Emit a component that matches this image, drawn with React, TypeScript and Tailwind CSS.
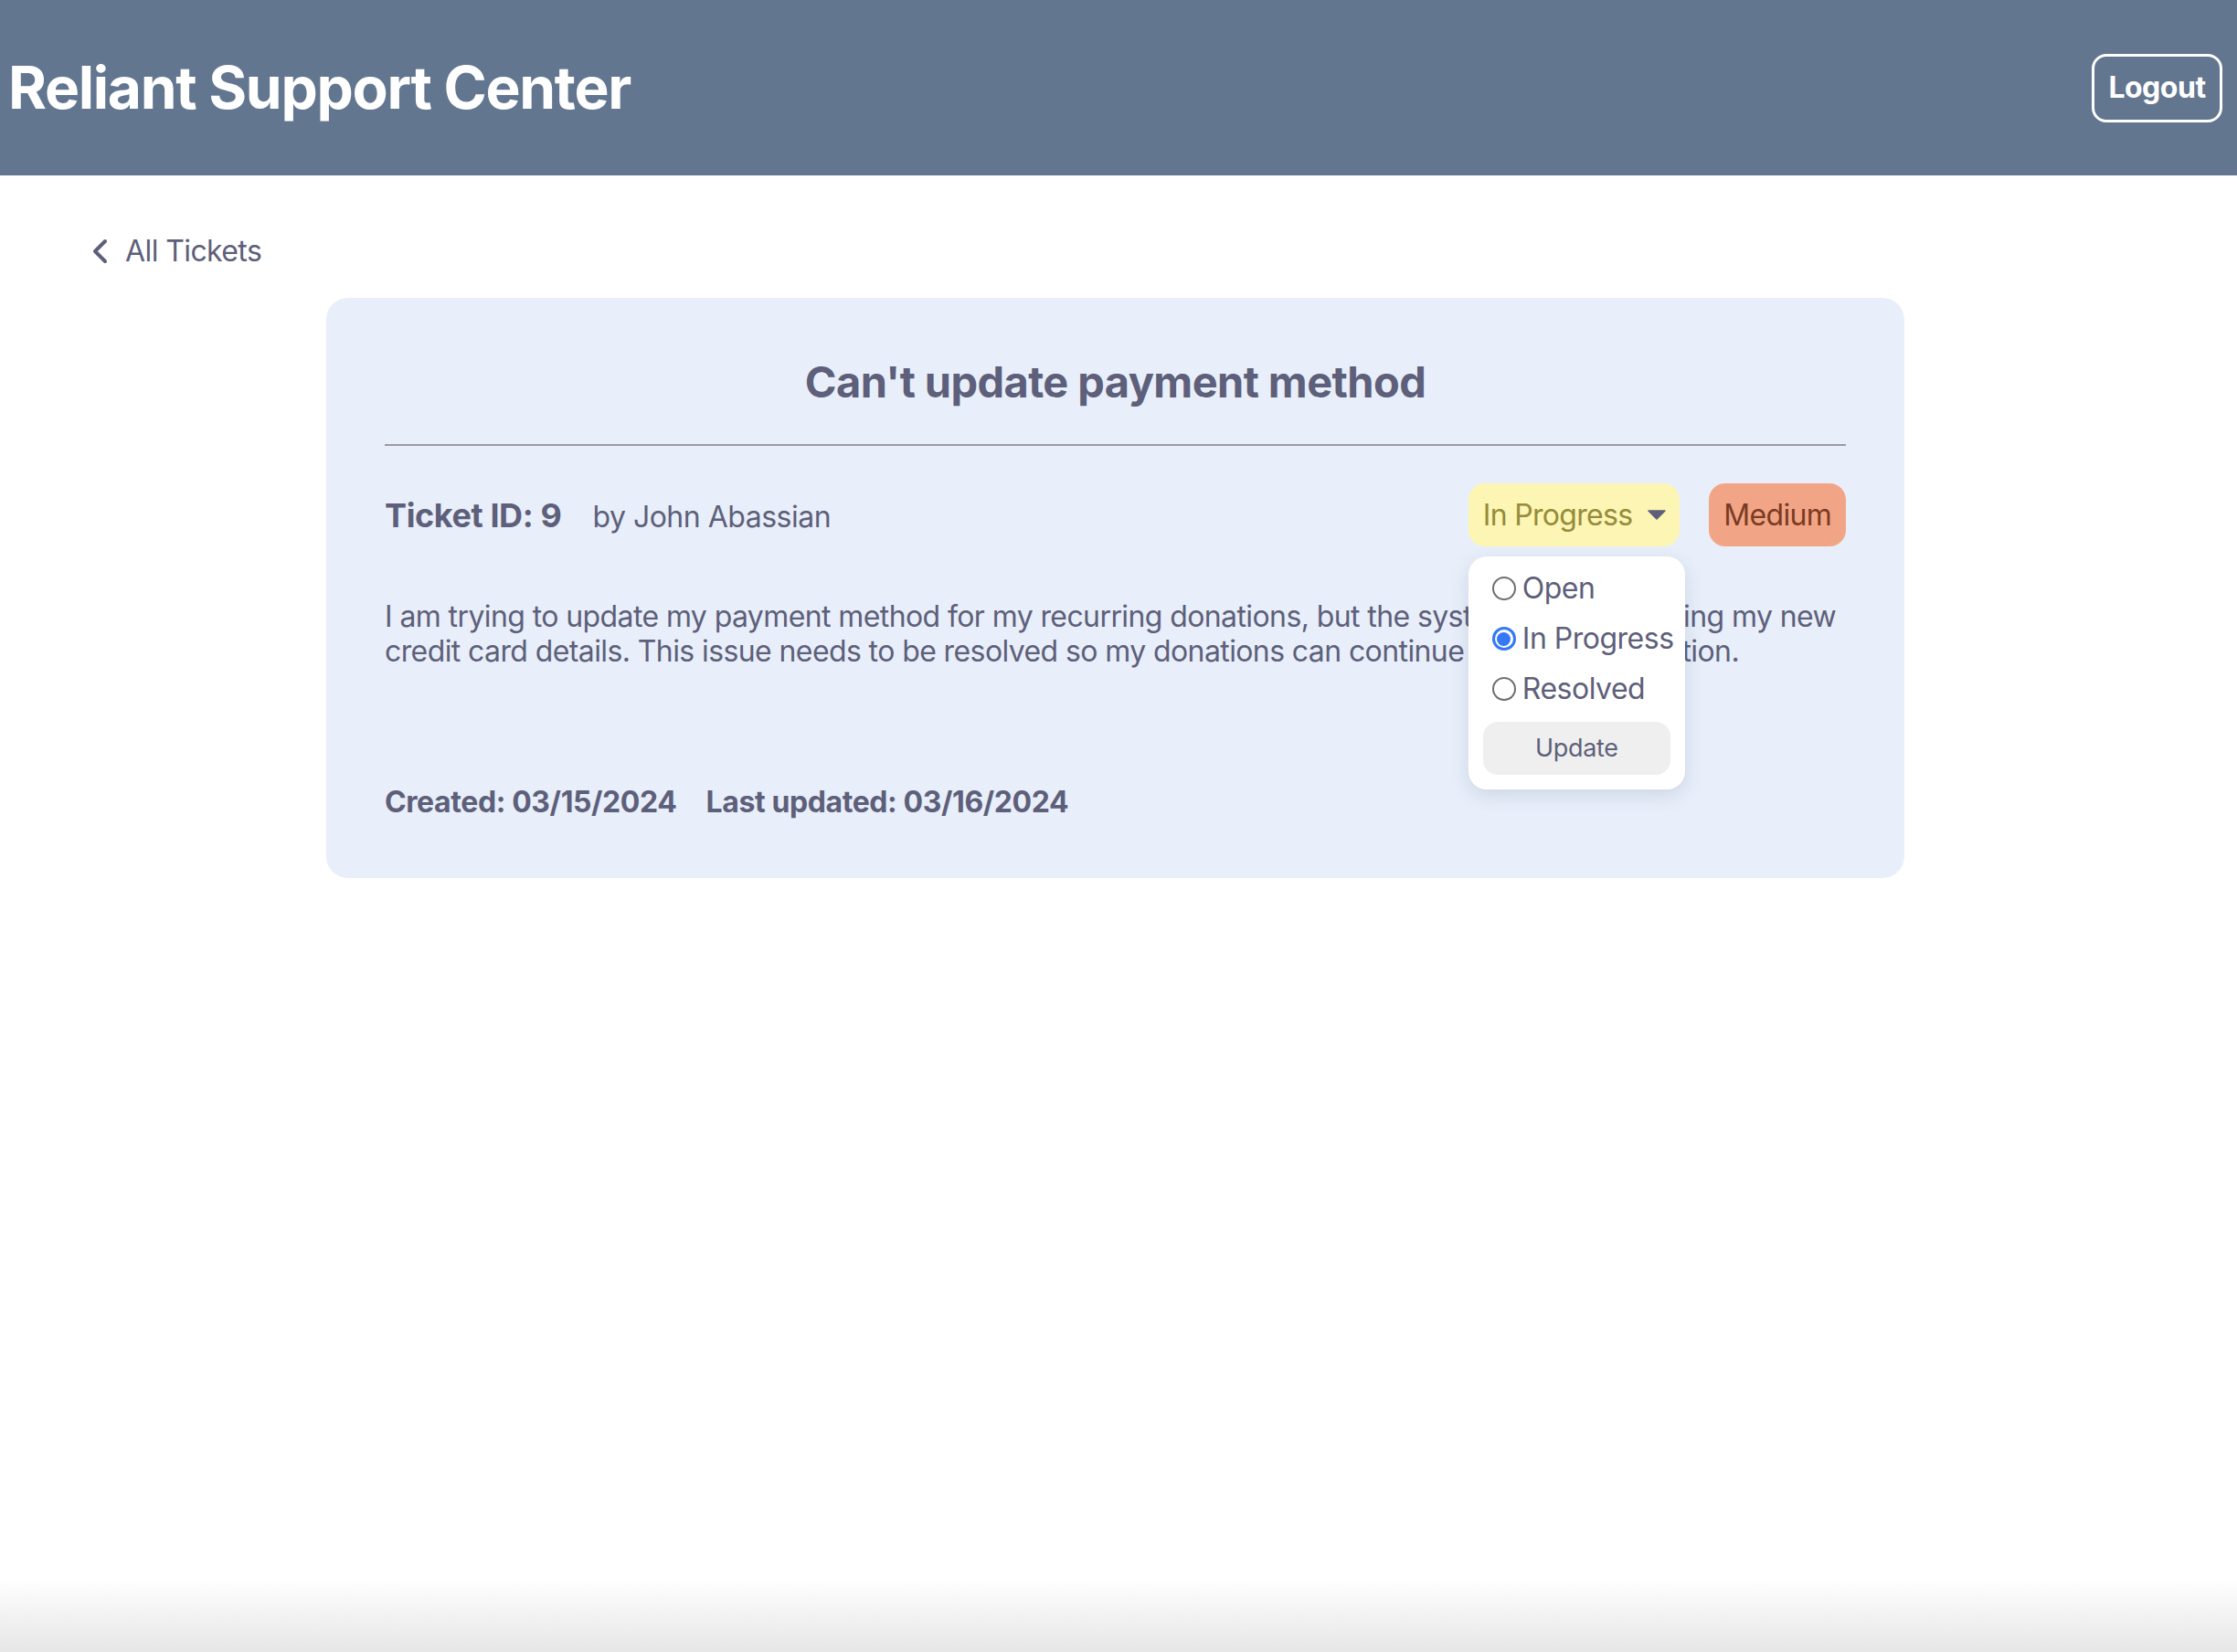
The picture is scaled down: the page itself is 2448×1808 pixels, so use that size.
import React from "react";

function Radio({ checked }: { checked?: boolean }) {
  if (checked) {
    return (
      <span className="ml-[10px] mr-[7px] flex h-[26px] w-[26px] shrink-0 items-center justify-center rounded-full border-[3px] border-[#3478f6] bg-white">
        <span className="h-[15px] w-[15px] rounded-full bg-[#3478f6]" />
      </span>
    );
  }
  return (
    <span className="ml-[10px] mr-[7px] h-[26px] w-[26px] shrink-0 rounded-full border-[2px] border-[#6f6f6f] bg-white" />
  );
}

export default function App() {
  return (
    <div className="flex min-h-[1808px] flex-col bg-white font-['Inter',sans-serif] text-[#5e5f7a]">
      <header className="flex h-[192px] items-center justify-between bg-[#627690] pl-[9px] pr-[16px]">
        <h1 className="text-[64px] font-bold leading-none tracking-[-1.3px] text-white">
          Reliant Support Center
        </h1>
        <button className="flex h-[75px] w-[143px] items-center justify-center rounded-[16px] border-[3px] border-white text-[32px] font-bold tracking-[-0.5px] text-white">
          Logout
        </button>
      </header>

      <main className="flex-1 px-[100px] pt-[64px]">
        <a className="flex h-[38px] items-center gap-[19px] text-[32px] leading-[38px] tracking-[-0.6px]">
          <svg width="18" height="28" viewBox="0 0 18 28" fill="none">
            <path d="M15 3 L4 14 L15 25" stroke="#5e5f7a" strokeWidth="4" strokeLinecap="round" strokeLinejoin="round" />
          </svg>
          <span>All Tickets</span>
        </a>

        <div className="ml-[257px] mt-[32px] w-[1727px] rounded-[24px] bg-[#e8effa] px-[64px] pb-[64px] pt-[64px]">
          <h2 className="text-center text-[47px] font-bold leading-[56px] tracking-[-0.6px]">
            Can't update payment method
          </h2>
          <div className="mt-[40px] h-[2px] bg-[#9b9b9b]" />

          <div className="mt-[41px] flex items-center justify-between">
            <div className="flex items-baseline gap-[34px]">
              <span className="text-[36px] font-bold tracking-[-0.4px]">Ticket ID: 9</span>
              <span className="text-[32px] tracking-[-0.5px]">by John Abassian</span>
            </div>
            <div className="flex items-center gap-[32px]">
              <div className="relative">
                <button className="flex h-[69px] items-center gap-[17px] rounded-[18px] bg-[#fdf5b4] pl-[16px] pr-[15px] text-[32px] tracking-[-0.7px] text-[#958c3b]">
                  <span>In Progress</span>
                  <svg width="20" height="11" viewBox="0 0 20 11">
                    <path d="M1 1 H19 L10 10 Z" fill="#5e5f7a" stroke="#5e5f7a" strokeWidth="1.5" strokeLinejoin="round" />
                  </svg>
                </button>
                <div className="absolute left-0 top-[80px] z-10 flex w-[237px] flex-col gap-[17px] rounded-[20px] bg-white p-[16px] shadow-[0_6px_20px_rgba(60,80,120,0.16)]">
                  <label className="flex h-[38px] items-center text-[32px] tracking-[-0.5px]">
                    <Radio />
                    <span>Open</span>
                  </label>
                  <label className="flex h-[38px] items-center text-[32px] tracking-[-0.5px]">
                    <Radio checked />
                    <span className="whitespace-nowrap">In Progress</span>
                  </label>
                  <label className="flex h-[38px] items-center text-[32px] tracking-[-0.5px]">
                    <Radio />
                    <span>Resolved</span>
                  </label>
                  <button className="flex h-[58px] items-center justify-center rounded-[16px] bg-[#efefef] text-[27px] tracking-[-0.3px] text-[#5e5f7a]">
                    Update
                  </button>
                </div>
              </div>
              <span className="flex h-[69px] items-center rounded-[18px] bg-[#f2a586] px-[16px] text-[32px] tracking-[-0.7px] text-[#7b3b22]">
                Medium
              </span>
            </div>
          </div>

          <p className="mt-[58px] text-[32px] leading-[37.5px] tracking-[-0.6px]">
            I am trying to update my payment method for my recurring donations, but the system keeps rejecting my new
            credit card details. This issue needs to be resolved so my donations can continue without interruption.
          </p>

          <div className="mt-[128px] flex gap-[32px] text-[32px] font-bold leading-[37.5px] tracking-[-0.4px]">
            <span>Created: 03/15/2024</span>
            <span>Last updated: 03/16/2024</span>
          </div>
        </div>
      </main>

      <div className="h-[80px] bg-gradient-to-b from-white to-[#e6e6e6]" />
    </div>
  );
}
